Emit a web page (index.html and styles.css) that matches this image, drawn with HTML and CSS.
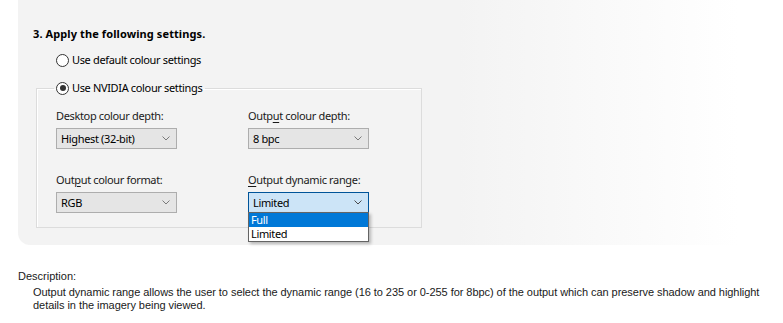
FILE: index.html
```html
<!DOCTYPE html>
<html lang="en">
<head>
  <meta charset="UTF-8">
  <title>Change resolution</title>
  <link rel="stylesheet" href="styles.css">
</head>
<body>
  <div class="settings-panel">
    <h2 class="step-title">3. Apply the following settings.</h2>

    <label class="radio-row">
      <span class="radio"></span>
      <span>Use default colour settings</span>
    </label>

    <fieldset class="group-box">
      <legend class="radio-row">
        <span class="radio checked"></span>
        <span>Use NVIDIA colour settings</span>
      </legend>

      <div class="field-grid">
        <div class="field">
          <div class="field-label">Desktop colour depth:</div>
          <div class="combo">
            <span>Highest (32-bit)</span>
            <svg class="chevron" width="8" height="5" viewBox="0 0 8 5"><path d="M0.5 0.5 L4 4 L7.5 0.5" fill="none" stroke="#7a7a7a" stroke-width="1"/></svg>
          </div>
        </div>

        <div class="field">
          <div class="field-label">Outp<u>u</u>t colour depth:</div>
          <div class="combo">
            <span>8 bpc</span>
            <svg class="chevron" width="8" height="5" viewBox="0 0 8 5"><path d="M0.5 0.5 L4 4 L7.5 0.5" fill="none" stroke="#7a7a7a" stroke-width="1"/></svg>
          </div>
        </div>

        <div class="field">
          <div class="field-label">Out<u>p</u>ut colour format:</div>
          <div class="combo">
            <span>RGB</span>
            <svg class="chevron" width="8" height="5" viewBox="0 0 8 5"><path d="M0.5 0.5 L4 4 L7.5 0.5" fill="none" stroke="#7a7a7a" stroke-width="1"/></svg>
          </div>
        </div>

        <div class="field">
          <div class="field-label"><u>O</u>utput dynamic range:</div>
          <div class="combo-wrap">
            <div class="combo focused">
              <span>Limited</span>
              <svg class="chevron" width="8" height="5" viewBox="0 0 8 5"><path d="M0.5 0.5 L4 4 L7.5 0.5" fill="none" stroke="#4a4a4a" stroke-width="1"/></svg>
            </div>
            <ul class="combo-list">
              <li class="selected">Full</li>
              <li>Limited</li>
            </ul>
          </div>
        </div>
      </div>
    </fieldset>
  </div>

  <div class="description">
    <div class="description-label">Description:</div>
    <p class="description-text">Output dynamic range allows the user to select the dynamic range (16 to 235 or 0-255 for 8bpc) of the output which can preserve shadow and highlight details in the imagery being viewed.</p>
  </div>
</body>
</html>
```

FILE: styles.css
```css
body {
  margin: 0;
  background-color: #ffffff;
  color: #000000;
  font-family: "Noto Sans", "DejaVu Sans", sans-serif;
  font-size: 11px;
  letter-spacing: -0.35px;
  overflow: hidden;
}

.settings-panel {
  margin-left: 18px;
  height: 245px;
  box-sizing: border-box;
  padding: 26px 0 0 15px;
  background: linear-gradient(to right, #f3f3f3 0, #f3f3f3 440px, #ffffff 720px);
  border-bottom-left-radius: 12px;
}

.step-title {
  margin: 0 0 10px 0;
  font-size: 11px;
  font-weight: bold;
  letter-spacing: 0.1px;
  line-height: 16px;
}

.radio-row {
  display: flex;
  align-items: center;
  gap: 3px;
  height: 16px;
  line-height: 16px;
}

.settings-panel > .radio-row {
  margin-left: 23px;
}

.radio {
  width: 13px;
  height: 13px;
  border: 1px solid #333333;
  border-radius: 50%;
  background: #ffffff;
  box-sizing: border-box;
  position: relative;
}

.radio.checked::after {
  content: "";
  position: absolute;
  left: 2.5px;
  top: 2.5px;
  width: 6px;
  height: 6px;
  border-radius: 50%;
  background: #333333;
}

.group-box {
  margin: 12px 0 0 3px;
  width: 386px;
  height: 148px;
  box-sizing: border-box;
  padding: 0 0 0 19px;
  border: 1px solid #dcdcdc;
  box-shadow: inset 1px 1px 0 #ffffff;
}

.group-box legend {
  padding: 0 3px 0 2px;
  margin-left: -2px;
}

.field-grid {
  display: grid;
  grid-template-columns: 192px 121px;
  row-gap: 23px;
  margin-top: 12px;
}

.field-label {
  height: 15px;
  line-height: 15px;
  margin-bottom: 5px;
  color: #1a1a1a;
}

.field-label u {
  text-underline-offset: 2px;
}

.combo {
  width: 121px;
  height: 21px;
  box-sizing: border-box;
  border: 1px solid #adadad;
  background: #e5e5e5;
  display: flex;
  align-items: center;
  justify-content: space-between;
  padding: 0 6px 0 4px;
}

.combo.focused {
  background: #cce4f7;
  border-color: #005499;
}

.combo-wrap {
  position: relative;
}

.combo-list {
  position: absolute;
  left: 0;
  top: 20px;
  width: 121px;
  box-sizing: border-box;
  margin: 0;
  padding: 0;
  list-style: none;
  background: #ffffff;
  border: 1px solid #646464;
  box-shadow: 2px 2px 3px rgba(0, 0, 0, 0.25);
}

.combo-list li {
  height: 14px;
  line-height: 14px;
  padding-left: 2px;
}

.combo-list li.selected {
  background: #0078d7;
  color: #ffffff;
}

.description {
  margin: 24px 0 0 18px;
  font-family: "Liberation Sans", sans-serif;
  font-size: 11px;
  letter-spacing: 0;
  color: #1a1a1a;
}

.description-label {
  line-height: 14px;
}

.description-text {
  margin: 3px 0 0 15px;
  width: 735px;
  line-height: 13px;
  letter-spacing: -0.05px;
}
```
